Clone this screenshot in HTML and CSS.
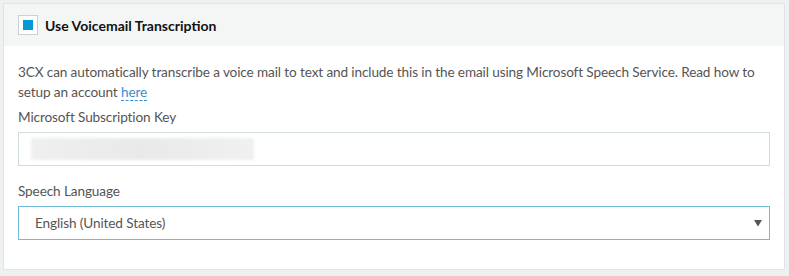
FILE: index.html
```html
<!DOCTYPE html>
<html>
<head>
<meta charset="utf-8">
<link rel="stylesheet" href="styles.css">
</head>
<body>
<div class="panel">
  <div class="panel-head">
    <span class="checkbox"><span class="check-fill"></span></span>
    <span class="title">Use Voicemail Transcription</span>
  </div>
  <div class="panel-body">
    <p class="desc">3CX can automatically transcribe a voice mail to text and include this in the email using Microsoft Speech Service. Read how to setup an account <a class="link" href="#">here</a></p>
    <label class="label">Microsoft Subscription Key</label>
    <div class="input"><span class="blur"></span></div>
    <label class="label label-2">Speech Language</label>
    <div class="select">
      <span class="select-text">English (United States)</span>
      <svg class="caret" width="8" height="8" viewBox="0 0 8 8"><path d="M0 1H8L4 7.5Z" fill="#555"/></svg>
    </div>
  </div>
</div>
</body>
</html>
```
FILE: styles.css
```css
html, body {
  margin: 0;
  padding: 0;
}
body {
  background: #eef1f1;
  font-family: Lato, "Noto Sans", sans-serif;
  font-size: 13.6px;
  letter-spacing: -0.12px;
  color: #555;
  width: 789px;
  height: 276px;
  padding: 3px 4px 0 3px;
  box-sizing: border-box;
}
.panel {
  background: #fff;
  border: 1px solid #e0e5e5;
  height: 267px;
  box-sizing: border-box;
}
.panel-head {
  background: #f4f6f6;
  height: 42px;
  display: flex;
  align-items: center;
  padding-left: 14px;
  gap: 7px;
}
.checkbox {
  width: 20px;
  height: 20px;
  box-sizing: border-box;
  border: 1px solid #c9d3d3;
  background: #fff;
  display: flex;
  align-items: center;
  justify-content: center;
}
.check-fill {
  width: 10px;
  height: 10px;
  background: #0a97d6;
}
.title {
  font-weight: bold;
  color: #111;
  font-size: 14px;
  letter-spacing: 0;
}
.panel-body {
  padding: 16px 14px 0 14px;
}
.desc {
  margin: 0;
  line-height: 20px;
}
.link {
  display: inline-block;
  line-height: 16px;
  color: #3a8fd0;
  text-decoration: none;
  border-bottom: 1px dashed #3a8fd0;
}
.label {
  display: block;
  margin-top: 5px;
  line-height: 20px;
  color: #555;
}
.label-2 {
  margin-top: 15px;
}
.input {
  margin-top: 5px;
  height: 34px;
  border: 1px solid #d3dcdc;
  box-sizing: border-box;
  display: flex;
  align-items: center;
  padding-left: 12px;
}
.blur {
  width: 223px;
  height: 22px;
  background: linear-gradient(90deg, #efefef, #e9e9e9 50%, #f0f0f0);
  filter: blur(1.5px);
}
.select {
  margin-top: 5px;
  height: 34px;
  border: 1px solid #72bcd8;
  box-sizing: border-box;
  display: flex;
  align-items: center;
  justify-content: space-between;
  padding: 0 7px 0 16px;
  color: #555;
}
.caret {
  display: block;
}
```
